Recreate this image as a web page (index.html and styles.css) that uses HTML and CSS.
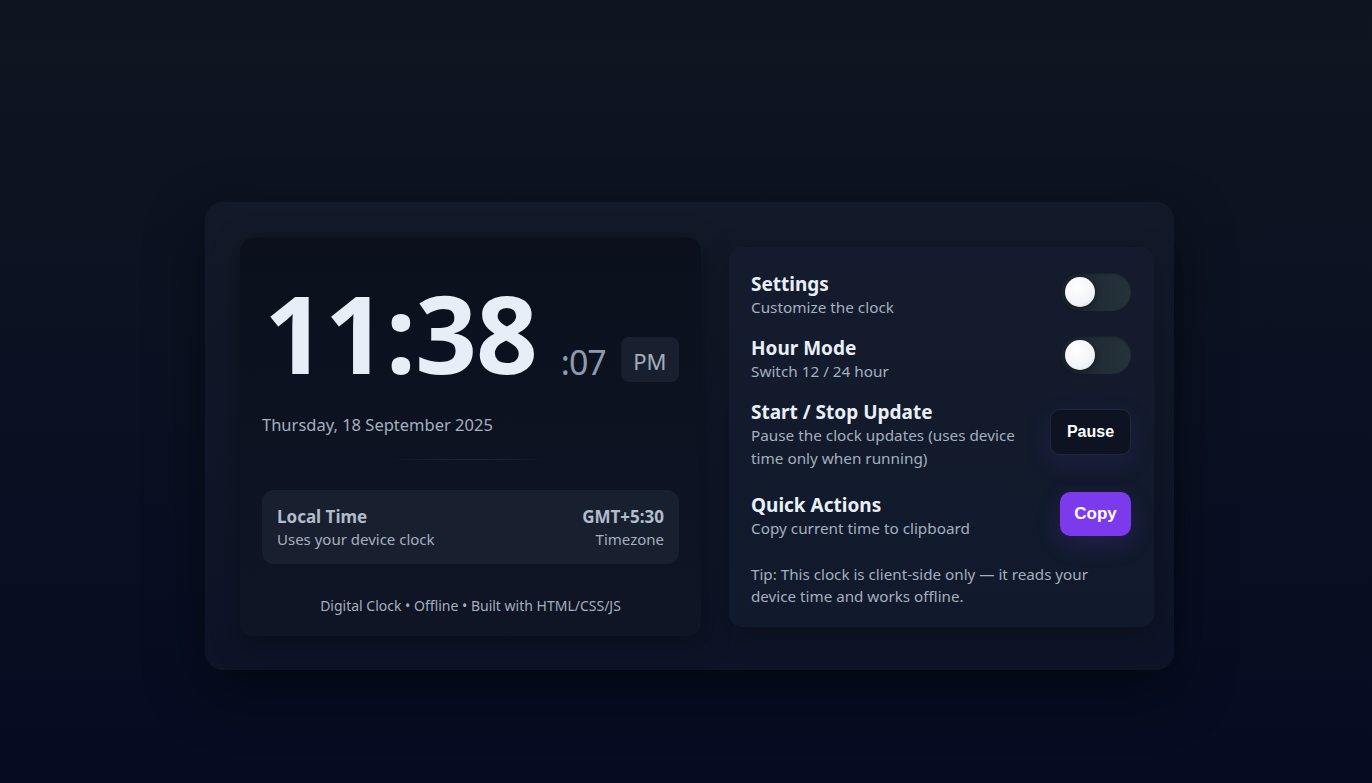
FILE: index.html
```html
<!DOCTYPE html>
<html lang="en">
<head>
<meta charset="utf-8">
<title>Digital Clock</title>
<link rel="stylesheet" href="styles.css">
</head>
<body>
<main class="shell">
  <section class="clock-card">
    <div class="time-row">
      <span class="hm">11:38</span>
      <span class="sec">:07</span>
      <span class="ampm">PM</span>
    </div>
    <div class="date">Thursday, 18 September 2025</div>
    <div class="divider"></div>
    <div class="info">
      <div class="info-left">
        <div class="info-title">Local Time</div>
        <div class="info-sub">Uses your device clock</div>
      </div>
      <div class="info-right">
        <div class="info-title">GMT+5:30</div>
        <div class="info-sub">Timezone</div>
      </div>
    </div>
    <div class="footer">Digital Clock • Offline • Built with HTML/CSS/JS</div>
  </section>
  <section class="panel">
    <div class="row">
      <div class="text">
        <div class="title">Settings</div>
        <div class="sub">Customize the clock</div>
      </div>
      <div class="toggle"><span class="knob"></span></div>
    </div>
    <div class="row row-hour">
      <div class="text">
        <div class="title">Hour Mode</div>
        <div class="sub">Switch 12 / 24 hour</div>
      </div>
      <div class="toggle"><span class="knob"></span></div>
    </div>
    <div class="row row-pause">
      <div class="text">
        <div class="title">Start / Stop Update</div>
        <div class="sub sub-wrap">Pause the clock updates (uses device time only when running)</div>
      </div>
      <button class="btn btn-dark">Pause</button>
    </div>
    <div class="row row-copy">
      <div class="text">
        <div class="title">Quick Actions</div>
        <div class="sub">Copy current time to clipboard</div>
      </div>
      <button class="btn btn-primary">Copy</button>
    </div>
    <p class="tip">Tip: This clock is client-side only — it reads your device time and works offline.</p>
  </section>
</main>
</body>
</html>
```
FILE: styles.css
```css
* { box-sizing: border-box; }
html, body { height: 100%; }
body {
  margin: 0;
  min-height: 100vh;
  background: linear-gradient(180deg, #0f1520 0%, #0a1122 50%, #050c22 100%);
  font-family: "Noto Sans", "Open Sans", "DejaVu Sans", sans-serif;
  color: #e6edf7;
  display: flex;
  align-items: flex-start;
  justify-content: flex-start;
}
.shell {
  margin: 202px 0 0 205px;
  width: 969px;
  height: 468px;
  padding: 35px 20px 34px 35px;
  border-radius: 18px;
  background: linear-gradient(180deg, #121a29 0%, #0d1427 100%);
  box-shadow: 0 20px 60px rgba(0,0,0,0.45);
  display: grid;
  grid-template-columns: 461px 425px;
  column-gap: 28px;
  align-items: center;
}
.clock-card {
  height: 399px;
  border-radius: 14px;
  background: linear-gradient(180deg, #0b101c 0%, #0d1322 60%, #0f1525 100%);
  box-shadow: 0 8px 30px rgba(0,0,0,0.35), inset 0 1px 0 rgba(255,255,255,0.02);
  padding: 42px 22px 0 22px;
  display: flex;
  flex-direction: column;
}
.time-row {
  display: flex;
  align-items: flex-end;
  height: 104px;
}
.hm {
  font-family: "Open Sans", "Noto Sans", sans-serif;
  font-weight: 700;
  font-size: 108px;
  line-height: 100px;
  letter-spacing: -1px;
  color: #e8eef8;
  margin-left: 2px;
  flex-shrink: 0;
}
.sec {
  font-size: 34px;
  line-height: 34px;
  letter-spacing: -1px;
  color: #8f9bad;
  margin-left: 24px;
  margin-bottom: 4px;
  flex-shrink: 0;
}
.ampm {
  flex-shrink: 0;
  margin-left: 15px;
  width: 58px;
  height: 45px;
  border-radius: 8px;
  background: #182030;
  color: #a3adbd;
  font-size: 22px;
  display: flex;
  align-items: center;
  justify-content: center;
  padding-top: 3px;
  position: relative;
  top: -1px;
}
.date {
  margin-top: 30px;
  font-size: 16.5px;
  color: #a4afbf;
  line-height: 24px;
}
.divider {
  margin: 22px auto 0;
  width: 165px;
  height: 1px;
  background: linear-gradient(90deg, transparent, rgba(148,163,184,0.15), transparent);
}
.info {
  margin-top: 30px;
  height: 74px;
  border-radius: 12px;
  background: #182030;
  padding: 16px 15px 0 15px;
  display: flex;
  justify-content: space-between;
}
.info-right { text-align: right; }
.info-title {
  font-weight: 700;
  font-size: 17px;
  line-height: 22px;
  color: #b2bccb;
}
.info-sub {
  font-size: 15px;
  line-height: 22px;
  color: #a4afbf;
}
.footer {
  margin-top: 32px;
  text-align: center;
  font-size: 14px;
  color: #a4afbf;
}
.panel {
  height: 380px;
  border-radius: 14px;
  background: linear-gradient(180deg, #131b2c 0%, #111a2c 100%);
  box-shadow: 0 8px 30px rgba(0,0,0,0.25);
  padding: 25px 23px 0 22px;
  display: flex;
  flex-direction: column;
}
.row {
  display: flex;
  align-items: center;
  justify-content: space-between;
}
.row-hour { margin-top: 17px; }
.row-pause { margin-top: 16px; }
.row-copy { margin-top: 23px; }
.title {
  font-weight: 700;
  font-size: 19px;
  line-height: 24px;
  color: #e9eff8;
}
.sub {
  font-size: 15.3px;
  line-height: 23px;
  color: #a4afbf;
}
.sub-wrap { width: 290px; }
.toggle {
  width: 70px;
  height: 38px;
  border-radius: 19px;
  background: linear-gradient(90deg, #1b2530, #26323a);
  padding: 4px 0 0 4px;
  margin-bottom: 6px;
  box-shadow: inset 0 1px 2px rgba(0,0,0,0.3);
}
.row-hour .toggle { margin-bottom: 10px; }
.knob {
  display: block;
  width: 30px;
  height: 30px;
  border-radius: 50%;
  background: radial-gradient(circle at 40% 35%, #ffffff 0%, #f1f4f8 60%, #d9dee6 100%);
  box-shadow: 0 2px 6px rgba(0,0,0,0.4);
}
.btn {
  font-family: "Liberation Sans", Arial, sans-serif;
  font-weight: 700;
  color: #ffffff;
  border-radius: 10px;
  cursor: pointer;
  flex-shrink: 0;
}
.btn-dark {
  width: 81px;
  height: 46px;
  font-size: 16px;
  background: #0d1320;
  border: 1px solid #1f2838;
  box-shadow: 0 8px 24px rgba(76, 48, 160, 0.2);
  margin-top: -5px;
}
.btn-primary {
  width: 71px;
  height: 44px;
  font-size: 17px;
  background: #7c3aed;
  border: none;
  box-shadow: 0 8px 24px rgba(124, 58, 237, 0.18);
  margin-top: -5px;
}
.tip {
  margin: 23px 0 0 0;
  font-size: 15.2px;
  line-height: 22px;
  color: #a4afbf;
}
```
